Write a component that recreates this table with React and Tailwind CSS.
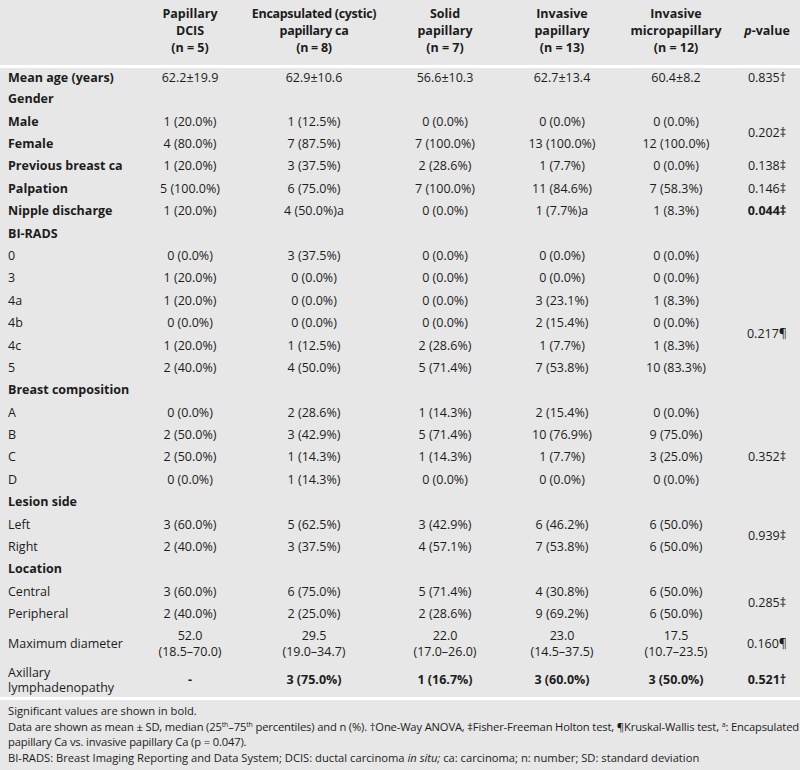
import React from "react";

const rows = [
  { label: "Mean age (years)", b: true, v: ["62.2±19.9", "62.9±10.6", "56.6±10.3", "62.7±13.4", "60.4±8.2"], p: "0.835†" },
  { label: "Gender", b: true, v: null },
  { label: "Male", b: true, v: ["1 (20.0%)", "1 (12.5%)", "0 (0.0%)", "0 (0.0%)", "0 (0.0%)"], p: "0.202‡", span: 2 },
  { label: "Female", b: true, v: ["4 (80.0%)", "7 (87.5%)", "7 (100.0%)", "13 (100.0%)", "12 (100.0%)"], skip: true },
  { label: "Previous breast ca", b: true, v: ["1 (20.0%)", "3 (37.5%)", "2 (28.6%)", "1 (7.7%)", "0 (0.0%)"], p: "0.138‡" },
  { label: "Palpation", b: true, v: ["5 (100.0%)", "6 (75.0%)", "7 (100.0%)", "11 (84.6%)", "7 (58.3%)"], p: "0.146‡" },
  { label: "Nipple discharge", b: true, v: ["1 (20.0%)", "4 (50.0%)a", "0 (0.0%)", "1 (7.7%)a", "1 (8.3%)"], p: "0.044‡", pb: true },
  { label: "BI-RADS", b: true, v: null },
  { label: "0", v: ["0 (0.0%)", "3 (37.5%)", "0 (0.0%)", "0 (0.0%)", "0 (0.0%)"], p: "" },
  { label: "3", v: ["1 (20.0%)", "0 (0.0%)", "0 (0.0%)", "0 (0.0%)", "0 (0.0%)"], p: "" },
  { label: "4a", v: ["1 (20.0%)", "0 (0.0%)", "0 (0.0%)", "3 (23.1%)", "1 (8.3%)"], p: "0.217¶", span: 4 },
  { label: "4b", v: ["0 (0.0%)", "0 (0.0%)", "0 (0.0%)", "2 (15.4%)", "0 (0.0%)"], skip: true },
  { label: "4c", v: ["1 (20.0%)", "1 (12.5%)", "2 (28.6%)", "1 (7.7%)", "1 (8.3%)"], skip: true },
  { label: "5", v: ["2 (40.0%)", "4 (50.0%)", "5 (71.4%)", "7 (53.8%)", "10 (83.3%)"], skip: true },
  { label: "Breast composition", b: true, v: null },
  { label: "A", v: ["0 (0.0%)", "2 (28.6%)", "1 (14.3%)", "2 (15.4%)", "0 (0.0%)"], p: "" },
  { label: "B", v: ["2 (50.0%)", "3 (42.9%)", "5 (71.4%)", "10 (76.9%)", "9 (75.0%)"], p: "" },
  { label: "C", v: ["2 (50.0%)", "1 (14.3%)", "1 (14.3%)", "1 (7.7%)", "3 (25.0%)"], p: "0.352‡" },
  { label: "D", v: ["0 (0.0%)", "1 (14.3%)", "0 (0.0%)", "0 (0.0%)", "0 (0.0%)"], p: "" },
  { label: "Lesion side", b: true, v: null },
  { label: "Left", v: ["3 (60.0%)", "5 (62.5%)", "3 (42.9%)", "6 (46.2%)", "6 (50.0%)"], p: "0.939‡", span: 2 },
  { label: "Right", v: ["2 (40.0%)", "3 (37.5%)", "4 (57.1%)", "7 (53.8%)", "6 (50.0%)"], skip: true },
  { label: "Location", b: true, v: null },
  { label: "Central", v: ["3 (60.0%)", "6 (75.0%)", "5 (71.4%)", "4 (30.8%)", "6 (50.0%)"], p: "0.285‡", span: 2 },
  { label: "Peripheral", v: ["2 (40.0%)", "2 (25.0%)", "2 (28.6%)", "9 (69.2%)", "6 (50.0%)"], skip: true },
];

const diam = [
  ["52.0", "(18.5–70.0)"],
  ["29.5", "(19.0–34.7)"],
  ["22.0", "(17.0–26.0)"],
  ["23.0", "(14.5–37.5)"],
  ["17.5", "(10.7–23.5)"],
];

function Sup({ children }) {
  return <span className="relative -top-[4px] text-[7px] leading-none">{children}</span>;
}

export default function App() {
  return (
    <div
      className="w-[800px] h-[770px] bg-[#e7e7e7] text-[#1c1c1c] text-[12.5px] overflow-hidden"
      style={{ fontFamily: '"Open Sans", "Noto Sans", sans-serif' }}
    >
      <table className="table-fixed border-collapse w-[800px]">
        <colgroup>
          <col className="w-[128px]" />
          <col className="w-[124px]" />
          <col className="w-[124px]" />
          <col className="w-[138px]" />
          <col className="w-[96px]" />
          <col className="w-[132px]" />
          <col className="w-[50px]" />
          <col className="w-[8px]" />
        </colgroup>
        <thead>
          <tr className="h-[66px] border-b-[3px] border-white font-bold leading-[17px] text-center whitespace-nowrap">
            <th className="p-0"></th>
            <th className="font-bold p-0 pb-[3px]">Papillary<br />DCIS<br />(n = 5)</th>
            <th className="font-bold p-0 pb-[3px] tracking-[-0.3px]">
              <div className="w-[124px] overflow-visible whitespace-nowrap flex flex-col items-center">
                <span>Encapsulated (cystic)</span>
                <span>papillary ca</span>
                <span>(n = 8)</span>
              </div>
            </th>
            <th className="font-bold p-0 pb-[3px]">Solid<br />papillary<br />(n = 7)</th>
            <th className="font-bold p-0 pb-[3px]">Invasive<br />papillary<br />(n = 13)</th>
            <th className="font-bold p-0 pb-[3px]">Invasive<br />micropapillary<br />(n = 12)</th>
            <th className="font-bold p-0 pb-[3px]"><i>p</i>-value</th>
            <th className="p-0"></th>
          </tr>
        </thead>
        <tbody>
          {rows.map((r, i) => (
            <tr key={i} className="h-[22.4px]">
              <td className={"pl-2 whitespace-nowrap " + (r.b ? "font-bold" : "")}>{r.label}</td>
              {r.v
                ? r.v.map((c, j) => (
                    <td key={j} className="text-center whitespace-nowrap">{c}</td>
                  ))
                : [0, 1, 2, 3, 4].map((j) => <td key={j}></td>)}
              {r.skip ? null : (
                <td rowSpan={r.span || 1} className={"text-center whitespace-nowrap " + (r.pb ? "font-bold" : "")}>
                  {r.p || ""}
                </td>
              )}
              <td></td>
            </tr>
          ))}
          <tr className="h-[37px] leading-[16px]">
            <td className="pl-2 whitespace-nowrap">Maximum diameter</td>
            {diam.map((d, j) => (
              <td key={j} className="text-center whitespace-nowrap">
                {d[0]}
                <br />
                {d[1]}
              </td>
            ))}
            <td className="text-center">0.160¶</td>
            <td></td>
          </tr>
          <tr className="h-[36px] border-b-[3px] border-white">
            <td className="pl-2 leading-[15px]">Axillary<br />lymphadenopathy</td>
            <td className="text-center font-bold">-</td>
            <td className="text-center font-bold">3 (75.0%)</td>
            <td className="text-center font-bold">1 (16.7%)</td>
            <td className="text-center font-bold">3 (60.0%)</td>
            <td className="text-center font-bold">3 (50.0%)</td>
            <td className="text-center font-bold">0.521†</td>
            <td></td>
          </tr>
        </tbody>
      </table>
      <div className="px-2 pt-[3px] text-[11.2px] leading-[15px] flex flex-col gap-[1px] whitespace-nowrap">
        <p>Significant values are shown in bold.</p>
        <p className="tracking-[-0.15px]">
          Data are shown as mean ± SD, median (25<Sup>th</Sup>–75<Sup>th</Sup> percentiles) and n (%). †One-Way ANOVA, ‡Fisher-Freeman Holton test, ¶Kruskal-Wallis test, <Sup>a</Sup>: Encapsulated
          <br />
          papillary Ca vs. invasive papillary Ca (p = 0.047).
        </p>
        <p>
          BI-RADS: Breast Imaging Reporting and Data System; DCIS: ductal carcinoma <i>in situ;</i> ca: carcinoma; n: number; SD: standard deviation
        </p>
      </div>
    </div>
  );
}
